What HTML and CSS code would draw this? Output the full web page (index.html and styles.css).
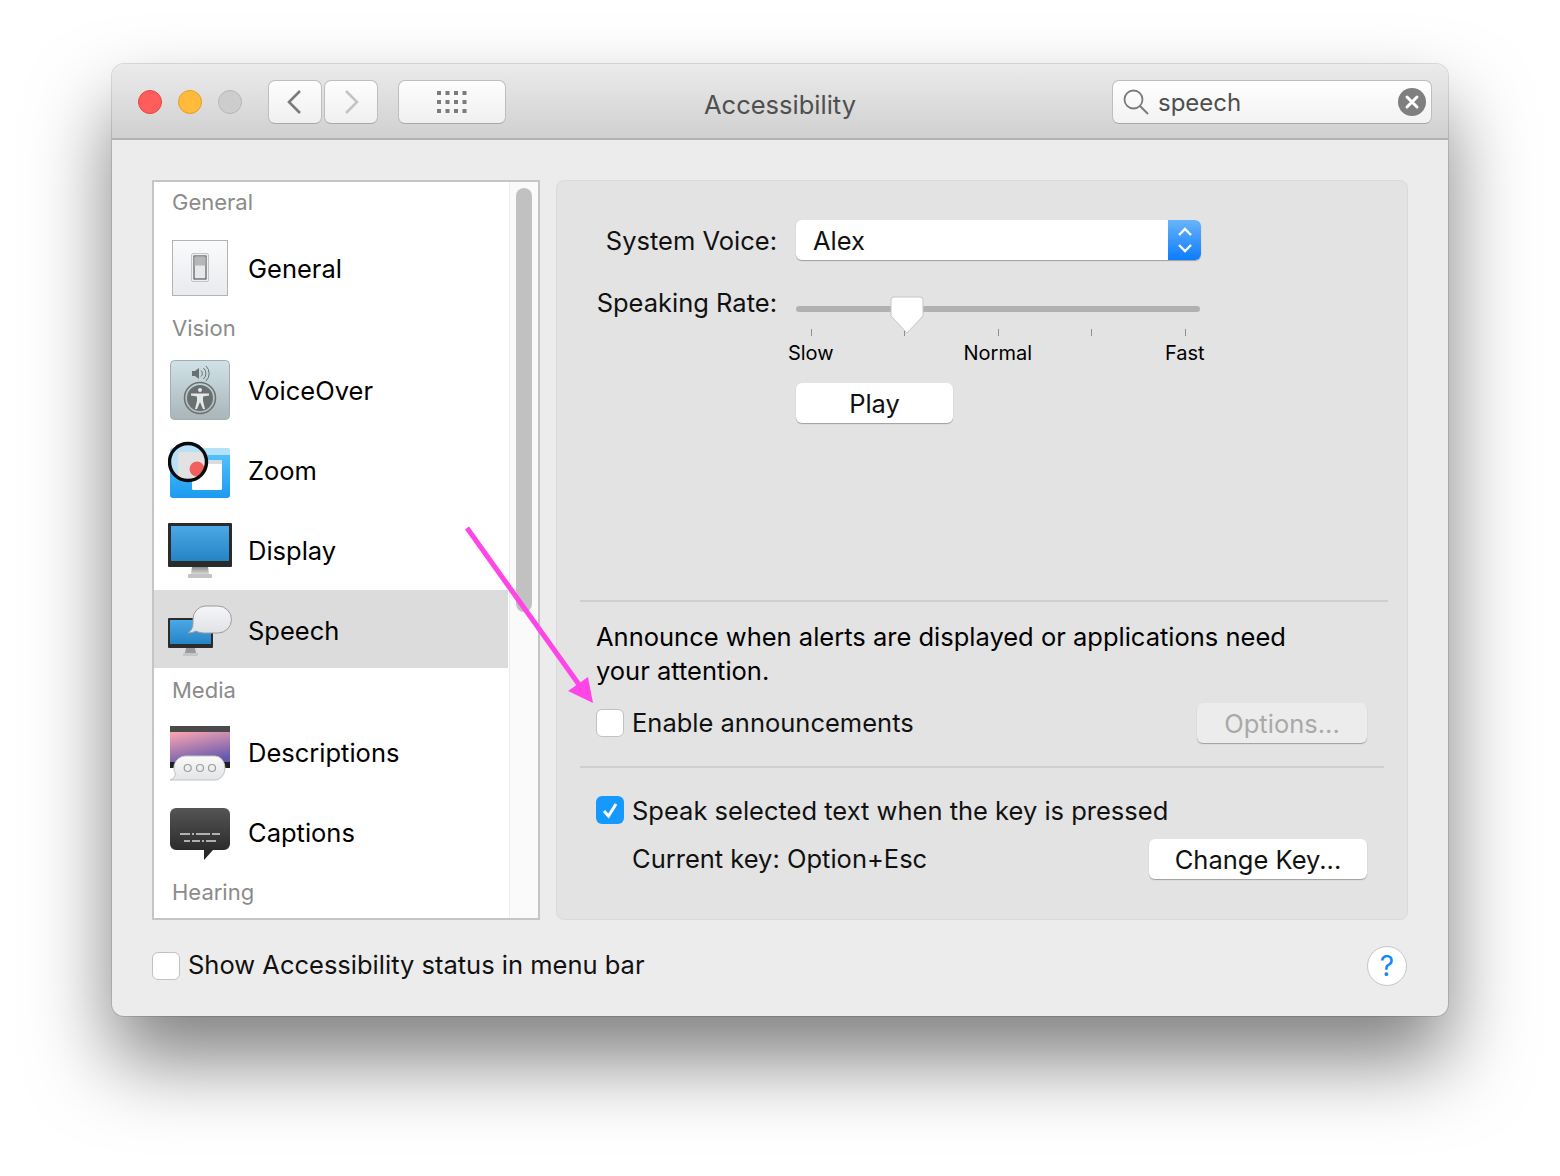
FILE: index.html
```html
<!DOCTYPE html>
<html lang="en">
<head>
    <meta charset="UTF-8">
    <title>Accessibility</title>
    <link rel="stylesheet" href="styles.css">
</head>
<body>
    <div class="window">
        <div class="titlebar">
            <div class="toolbar">
                <div class="lights">
                    <span class="light red"></span>
                    <span class="light yellow"></span>
                    <span class="light gray"></span>
                </div>
                <div class="nav">
                    <div class="tool nav-btn">
                        <svg width="18" height="26" viewBox="0 0 18 26"><path d="M14 2 3 13l11 11" fill="none" stroke="#7b7b7b" stroke-width="2.6"/></svg>
                    </div>
                    <div class="tool nav-btn">
                        <svg width="18" height="26" viewBox="0 0 18 26"><path d="m4 2 11 11L4 24" fill="none" stroke="#c4c4c4" stroke-width="2.6"/></svg>
                    </div>
                </div>
                <div class="tool grid-btn">
                    <svg width="30" height="22" viewBox="0 0 30 22" fill="#7b7b7b">
                        <rect x="0" y="0" width="4" height="4"/><rect x="8.5" y="0" width="4" height="4"/><rect x="17" y="0" width="4" height="4"/><rect x="25.5" y="0" width="4" height="4"/>
                        <rect x="0" y="9" width="4" height="4"/><rect x="8.5" y="9" width="4" height="4"/><rect x="17" y="9" width="4" height="4"/><rect x="25.5" y="9" width="4" height="4"/>
                        <rect x="0" y="18" width="4" height="4"/><rect x="8.5" y="18" width="4" height="4"/><rect x="17" y="18" width="4" height="4"/><rect x="25.5" y="18" width="4" height="4"/>
                    </svg>
                </div>
            </div>
            <div class="title">Accessibility</div>
            <div class="search">
                <svg width="26" height="26" viewBox="0 0 26 26"><circle cx="10.5" cy="10.5" r="9" fill="none" stroke="#7a7a7a" stroke-width="1.8"/><path d="m17 17 8 8" stroke="#7a7a7a" stroke-width="2"/></svg>
                <span class="search-text">speech</span>
                <svg class="clear" width="28" height="28" viewBox="0 0 28 28"><circle cx="14" cy="14" r="14" fill="#7f7f7f"/><path d="m9 9 10 10M19 9 9 19" stroke="#fff" stroke-width="3" stroke-linecap="round"/></svg>
            </div>
        </div>

        <div class="content">
            <div class="main">
                <div class="sidebar">
                    <div class="list">
                        <div class="group first">General</div>
                        <div class="row row-general">
                            <svg class="icon" width="64" height="64" viewBox="0 0 64 64">
                                <defs><linearGradient id="g-general" x1="0" y1="0" x2="0" y2="1"><stop offset="0" stop-color="#fafbfc"/><stop offset="1" stop-color="#e8eaee"/></linearGradient></defs>
                                <rect x="4.5" y="4.5" width="55" height="55" fill="url(#g-general)" stroke="#b4b4b4"/>
                                <rect x="23.5" y="17.5" width="17" height="28" rx="1.5" fill="#eef0f2" stroke="#c4c4c4"/>
                                <rect x="26" y="20" width="12" height="23" fill="#e6e9ec" stroke="#3c3c3c"/>
                                <rect x="26.5" y="20.5" width="11" height="9" fill="#b4b6b8"/>
                            </svg>
                            General
                        </div>
                        <div class="group">Vision</div>
                        <div class="row">
                            <svg class="icon" width="64" height="64" viewBox="0 0 64 64">
                                <defs><linearGradient id="g-vo" x1="0" y1="0" x2="0" y2="1"><stop offset="0" stop-color="#d0e2e8"/><stop offset="1" stop-color="#a9b5b7"/></linearGradient></defs>
                                <rect x="2.5" y="2.5" width="59" height="59" rx="4" fill="url(#g-vo)" stroke="#a3adaf"/>
                                <path d="M24 13h3l4-3v11l-4-3h-3z" fill="#6a6f70"/>
                                <path d="M33 12.5a4 4 0 0 1 0 6M35.500 10a7.500 7.500 0 0 1 0 11M38 8a10.500 10.500 0 0 1 0 15" fill="none" stroke="#6a6f70" stroke-width="1"/>
                                <circle cx="32" cy="40" r="15.500" fill="none" stroke="#6a6f70" stroke-width="1.500"/>
                                <circle cx="32" cy="40" r="13" fill="#6a6f70"/>
                                <circle cx="32" cy="32" r="2" fill="#e4e8e8"/>
                                <path d="M23 35.500H41V37.500L35 38.500V43L37 51H35L32 44 29 51H27L29 43V38.500L23 37.500z" fill="#e4e8e8"/>
                            </svg>
                            VoiceOver
                        </div>
                        <div class="row">
                            <svg class="icon" width="64" height="64" viewBox="0 0 64 64">
                                <defs>
                                    <linearGradient id="g-zoom" x1="0" y1="0" x2="0" y2="1"><stop offset="0" stop-color="#5cc6fb"/><stop offset="1" stop-color="#1c9af0"/></linearGradient>
                                    <clipPath id="c-zoom"><circle cx="20" cy="24" r="18"/></clipPath>
                                </defs>
                                <rect x="2" y="10" width="60" height="50" rx="3" fill="url(#g-zoom)"/>
                                <path d="M2 13a3 3 0 0 1 3-3h54a3 3 0 0 1 3 3v4H2z" fill="#b4e2fb"/>
                                <rect x="24" y="22" width="30" height="30" rx="1.500" fill="#fff"/>
                                <rect x="24" y="22" width="30" height="4" fill="#d9dcdf"/>
                                <g clip-path="url(#c-zoom)">
                                    <rect x="0" y="4" width="40" height="40" fill="#b8e0f6"/>
                                    <rect x="10" y="14" width="32" height="32" rx="3" fill="#e2e2e2"/>
                                    <circle cx="29" cy="31" r="7.500" fill="#f2605e"/>
                                </g>
                                <circle cx="20" cy="24" r="18.500" fill="none" stroke="#0a0a0a" stroke-width="3.400"/>
                            </svg>
                            Zoom
                        </div>
                        <div class="row">
                            <svg class="icon" width="64" height="64" viewBox="0 0 64 64">
                                <defs>
                                    <linearGradient id="g-screen" x1="0" y1="0" x2="0" y2="1"><stop offset="0" stop-color="#4ca8e6"/><stop offset="1" stop-color="#2484c4"/></linearGradient>
                                    <linearGradient id="g-stand" x1="0" y1="0" x2="0" y2="1"><stop offset="0" stop-color="#8c8c8c"/><stop offset="1" stop-color="#d8d8d8"/></linearGradient>
                                </defs>
                                <path d="M24 49h16l1 7H23z" fill="url(#g-stand)"/>
                                <rect x="20" y="56" width="24" height="4" rx="1" fill="#c4c4c4"/>
                                <rect x="0" y="5" width="64" height="44" rx="1" fill="#2b2b2b"/>
                                <rect x="3" y="8" width="58" height="35" fill="url(#g-screen)"/>
                            </svg>
                            Display
                        </div>
                        <div class="row row-selected">
                            <svg class="icon" width="64" height="64" viewBox="0 0 64 64">
                                <defs><linearGradient id="g-bubble" x1="0" y1="0" x2="0" y2="1"><stop offset="0" stop-color="#f6f6f8"/><stop offset="1" stop-color="#dfe2e8"/></linearGradient></defs>
                                <path d="M18 50h9l1 5H17z" fill="#9a9a9a"/>
                                <rect x="15" y="55" width="15" height="3" rx="1" fill="#c6c6c6"/>
                                <rect x="0" y="20" width="45" height="30" rx="1" fill="#2b2b2b"/>
                                <rect x="2" y="22" width="41" height="24" fill="url(#g-screen)"/>
                                <path d="M37 8h13a13 13 0 0 1 0 27H36c-3 0-6-1-8-2-2 1-5 2-8 2 3-2 5-5 5-10v-4A13 13 0 0 1 37 8z" fill="url(#g-bubble)" stroke="#9c9c9c"/>
                            </svg>
                            Speech
                        </div>
                        <div class="group">Media</div>
                        <div class="row">
                            <svg class="icon" width="64" height="64" viewBox="0 -1 64 64">
                                <defs>
                                    <linearGradient id="g-desc" x1="0.2" y1="0" x2="0.6" y2="1"><stop offset="0" stop-color="#f4a2b2"/><stop offset="1" stop-color="#6558ac"/></linearGradient>
                                    <linearGradient id="g-desc-b" x1="0" y1="0" x2="0" y2="1"><stop offset="0" stop-color="#fafafa"/><stop offset="1" stop-color="#e2e4e6"/></linearGradient>
                                </defs>
                                <rect x="2" y="5" width="60" height="42" fill="#1f1f1f"/>
                                <rect x="2" y="5" width="60" height="6" fill="#4a4a4a"/>
                                <rect x="2" y="11" width="60" height="30" fill="url(#g-desc)"/>
                                <path d="M17 35h30a10 12 0 0 1 0 24H17c-4 0-7 0-15 0 3-1 5-3 5.500-6A12 12 0 0 1 17 35z" fill="url(#g-desc-b)" stroke="#c2c2c2"/>
                                <g fill="none" stroke="#9c9c9c" stroke-width="1.200"><circle cx="19.700" cy="47" r="3.500"/><circle cx="32" cy="47" r="3.500"/><circle cx="44" cy="47" r="3.500"/></g>
                            </svg>
                            Descriptions
                        </div>
                        <div class="row">
                            <svg class="icon" width="64" height="64" viewBox="0 -1 64 64">
                                <defs><linearGradient id="g-cap" x1="0" y1="0" x2="0" y2="1"><stop offset="0" stop-color="#555"/><stop offset="1" stop-color="#222"/></linearGradient></defs>
                                <path d="M8 7h48a6 6 0 0 1 6 6v30a6 6 0 0 1-6 6H45l-9 10V49H8a6 6 0 0 1-6-6V13a6 6 0 0 1 6-6z" fill="url(#g-cap)"/>
                                <path d="M12 33h10M24 33h2M28 33h14M44 33h8M16 40h6M24 40h8M34 40h2M38 40h10" stroke="#d8d8d8" stroke-width="1.500"/>
                            </svg>
                            Captions
                        </div>
                        <div class="group last">Hearing</div>
                    </div>
                    <div class="track"><div class="thumb"></div></div>
                </div>

                <div class="panel">
                    <div class="section-voice">
                        <div class="form-row">
                            <span class="form-label voice-label">System Voice:</span>
                            <div class="popup">
                                <span class="popup-text">Alex</span>
                                <span class="popup-arrows">
                                    <svg width="16" height="28" viewBox="0 0 16 28"><path d="m2 9 6-6 6 6M2 19l6 6 6-6" fill="none" stroke="#fff" stroke-width="2.400"/></svg>
                                </span>
                            </div>
                        </div>
                        <div class="form-row rate-row">
                            <span class="form-label">Speaking Rate:</span>
                            <div class="slider">
                                <div class="slider-track"></div>
                                <svg class="slider-thumb" width="34" height="40" viewBox="0 0 34 40"><path d="M4 1h26a3 3 0 0 1 3 3v16L17 37 1 20V4a3 3 0 0 1 3-3z" fill="#fff" stroke="#c6c6c6"/></svg>
                                <div class="scale">
                                    <span class="tick"></span><span class="tick"></span><span class="tick"></span><span class="tick"></span><span class="tick"></span>
                                    <span class="scale-label">Slow</span><span></span><span class="scale-label">Normal</span><span></span><span class="scale-label">Fast</span>
                                </div>
                            </div>
                        </div>
                        <div class="button play-btn">Play</div>
                    </div>

                    <div class="section-announce">
                        <p class="announce-text">Announce when alerts are displayed or applications need your attention.</p>
                        <div class="option-row">
                            <span class="check"></span>
                            <span class="option-label lifted">Enable announcements</span>
                            <div class="button disabled options-btn">Options...</div>
                        </div>
                    </div>

                    <div class="section-key">
                        <div class="speak-row">
                            <span class="check checked">
                                <svg width="20" height="20" viewBox="0 0 20 20"><path d="m4 11 4.500 5L16 4" fill="none" stroke="#fff" stroke-width="3"/></svg>
                            </span>
                            <span class="option-label">Speak selected text when the key is pressed</span>
                        </div>
                        <div class="key-row">
                            <span class="lifted">Current key: Option+Esc</span>
                            <div class="button change-btn">Change Key...</div>
                        </div>
                    </div>
                </div>
            </div>

            <div class="footer">
                <span class="check"></span>
                <span class="option-label footer-label">Show Accessibility status in menu bar</span>
                <div class="help">?</div>
            </div>
        </div>

        <svg class="arrow" width="140" height="190" viewBox="0 0 140 190">
            <path d="M2 2 120 167" stroke="#ff45e6" stroke-width="5" fill="none"/>
            <path d="M128 177 103 165 123 151z" fill="#ff45e6"/>
        </svg>
    </div>
</body>
</html>
```

FILE: styles.css
```css
* {
    box-sizing: border-box;
}

body {
    margin: 0;
    height: 1176px;
    padding: 64px 112px 0;
    background: #fff;
    font-family: "Inter", "Liberation Sans", sans-serif;
    font-size: 25.5px;
    color: #111;
    overflow: hidden;
}

.window {
    position: relative;
    width: 1336px;
    height: 952px;
    border-radius: 12px;
    background: #ececec;
    box-shadow: 0 0 0 1px rgba(0, 0, 0, .12), 0 44px 80px rgba(0, 0, 0, .5);
}

/* title bar */
.titlebar {
    display: grid;
    grid-template-columns: 1fr auto 1fr;
    align-items: center;
    height: 76px;
    padding: 2px 16px 0;
    border-radius: 12px 12px 0 0;
    border-bottom: 2px solid #b3b3b3;
    background: linear-gradient(#ebebeb, #d0d0d0);
}

.toolbar {
    display: flex;
    align-items: center;
}

.lights {
    display: flex;
    gap: 16px;
    margin-left: 10px;
}

.light {
    width: 24px;
    height: 24px;
    border-radius: 50%;
    border: 1px solid;
}

.red {
    background: #ff5d5b;
    border-color: #e2463f;
}

.yellow {
    background: #ffbb39;
    border-color: #e09e28;
}

.gray {
    background: #cdcdcd;
    border-color: #b8b8b8;
}

.nav {
    display: flex;
    gap: 2px;
    margin-left: 26px;
}

.tool {
    display: flex;
    align-items: center;
    justify-content: center;
    height: 44px;
    border: 1px solid #bebebe;
    border-bottom-color: #a8a8a8;
    border-radius: 7px;
    background: linear-gradient(#fdfdfd, #f0f0f0);
}

.nav-btn {
    width: 54px;
}

.grid-btn {
    width: 108px;
    margin-left: 20px;
}

.title {
    padding-top: 6px;
    color: #4f4f4f;
    line-height: 32px;
}

.search {
    display: flex;
    align-items: center;
    justify-self: end;
    width: 320px;
    height: 44px;
    padding: 0 5px 0 10px;
    border: 1px solid #bebebe;
    border-bottom-color: #a8a8a8;
    border-radius: 7px;
    background: linear-gradient(#fff, #f2f2f2);
}

.search-text {
    margin-left: 9px;
    padding-top: 1px;
    font-size: 24px;
    color: #4f4f4f;
}

.clear {
    margin-left: auto;
}

/* content */
.content {
    padding: 40px 40px 0;
}

.main {
    display: flex;
    gap: 16px;
    height: 740px;
}

.sidebar {
    display: flex;
    width: 388px;
    border: 2px solid #c5c5c5;
    background: #fff;
    overflow: hidden;
}

.list {
    width: 355px;
    flex: none;
}

.group {
    display: flex;
    align-items: center;
    height: 44px;
    padding-left: 18px;
    font-size: 22px;
    color: #8b8b8b;
}

.group.first {
    height: 48px;
    padding-bottom: 8px;
}

.group.last {
    padding-bottom: 4px;
}

.row {
    display: flex;
    align-items: center;
    gap: 16px;
    height: 80px;
    padding-left: 14px;
    color: #000;
}

.row-general {
    height: 76px;
}

.row-selected {
    height: 78px;
    margin-right: 1px;
    padding-top: 2px;
    background: #dcdcdc;
}

.icon {
    flex: none;
}

.track {
    flex: 1;
    padding: 6px 0 0 6px;
    border-left: 1px solid #ededed;
    background: #fafafa;
}

.thumb {
    width: 16px;
    height: 424px;
    border-radius: 8px;
    background: #c1c1c1;
}

.panel {
    display: flex;
    flex-direction: column;
    width: 852px;
    border: 1px solid #dadada;
    border-radius: 8px;
    background: #e3e3e3;
}

.section-voice {
    height: 419px;
    padding-top: 39px;
}

.form-row {
    display: flex;
    gap: 19px;
}

.form-label {
    width: 220px;
    text-align: right;
    line-height: 40px;
}

.voice-label {
    height: 40px;
    line-height: 41px;
}

.popup {
    display: flex;
    justify-content: space-between;
    width: 405px;
    height: 40px;
    border-radius: 6px;
    background: #fff;
    box-shadow: 0 1px 1px rgba(0, 0, 0, .3);
    overflow: hidden;
}

.popup-text {
    padding-left: 17px;
    line-height: 41px;
}

.popup-arrows {
    display: flex;
    align-items: center;
    justify-content: center;
    width: 33px;
    background: linear-gradient(#69b4fa, #0c7cff);
}

.rate-row {
    margin-top: 23px;
}

.slider {
    position: relative;
    width: 405px;
    height: 100px;
}

.slider-track {
    width: 404px;
    height: 6px;
    margin-top: 23px;
    border-radius: 3px;
    background: #b1b1b1;
}

.slider-thumb {
    position: absolute;
    left: 94px;
    top: 13px;
}

.scale {
    display: grid;
    grid-template-columns: repeat(5, 93.5px);
    width: 467.5px;
    margin: 17px 0 0 -31.5px;
    justify-items: center;
    font-size: 20px;
}

.tick {
    width: 1px;
    height: 7px;
    margin-bottom: 5px;
    background: #8e8e8e;
}

.scale-label {
    padding-right: 1px;
    white-space: nowrap;
    line-height: 24px;
    color: #000;
}

.button {
    display: flex;
    align-items: center;
    justify-content: center;
    height: 40px;
    border-radius: 6px;
    background: #fff;
    box-shadow: 0 1px 1px rgba(0, 0, 0, .3);
}

.play-btn {
    width: 157px;
    margin: 0 0 0 239px;
}

.section-announce {
    height: 166px;
    margin: 0 19px 0 23px;
    padding: 18px 0 0 16px;
    border-top: 2px solid #cfcfcf;
}

.announce-text {
    width: 720px;
    margin: 0;
    line-height: 34px;
    color: #000;
}

.option-row {
    display: flex;
    align-items: center;
    height: 40px;
    margin-top: 15px;
    padding-right: 21px;
}

.check {
    display: flex;
    align-items: center;
    justify-content: center;
    flex: none;
    width: 28px;
    height: 28px;
    border: 1px solid #c2c2c2;
    border-radius: 6px;
    background: #fff;
}

.check.checked {
    border: none;
    background: #1599ff;
}

.option-label {
    margin-left: 8px;
}

.lifted {
    padding-bottom: 2px;
}

.footer-label {
    padding-bottom: 4px;
}

.options-btn {
    width: 170px;
    margin-left: auto;
    background: #ececec;
    color: #a9a9a9;
}

.section-key {
    flex: 1;
    margin: 0 23px;
    padding: 26px 17px 0 16px;
    border-top: 2px solid #cfcfcf;
}

.speak-row {
    display: flex;
    align-items: center;
    height: 32px;
}

.key-row {
    display: flex;
    align-items: center;
    justify-content: space-between;
    height: 40px;
    margin-top: 13px;
    padding-left: 36px;
}

.change-btn {
    width: 218px;
}

.footer {
    display: flex;
    align-items: center;
    height: 40px;
    margin-top: 26px;
    padding-right: 1px;
}

.help {
    display: flex;
    align-items: center;
    justify-content: center;
    width: 40px;
    height: 40px;
    margin-left: auto;
    border: 1px solid #c6c6c6;
    border-radius: 50%;
    background: #fff;
    color: #1587fa;
    font-size: 28px;
}

.arrow {
    position: absolute;
    left: 353px;
    top: 462px;
}
```
